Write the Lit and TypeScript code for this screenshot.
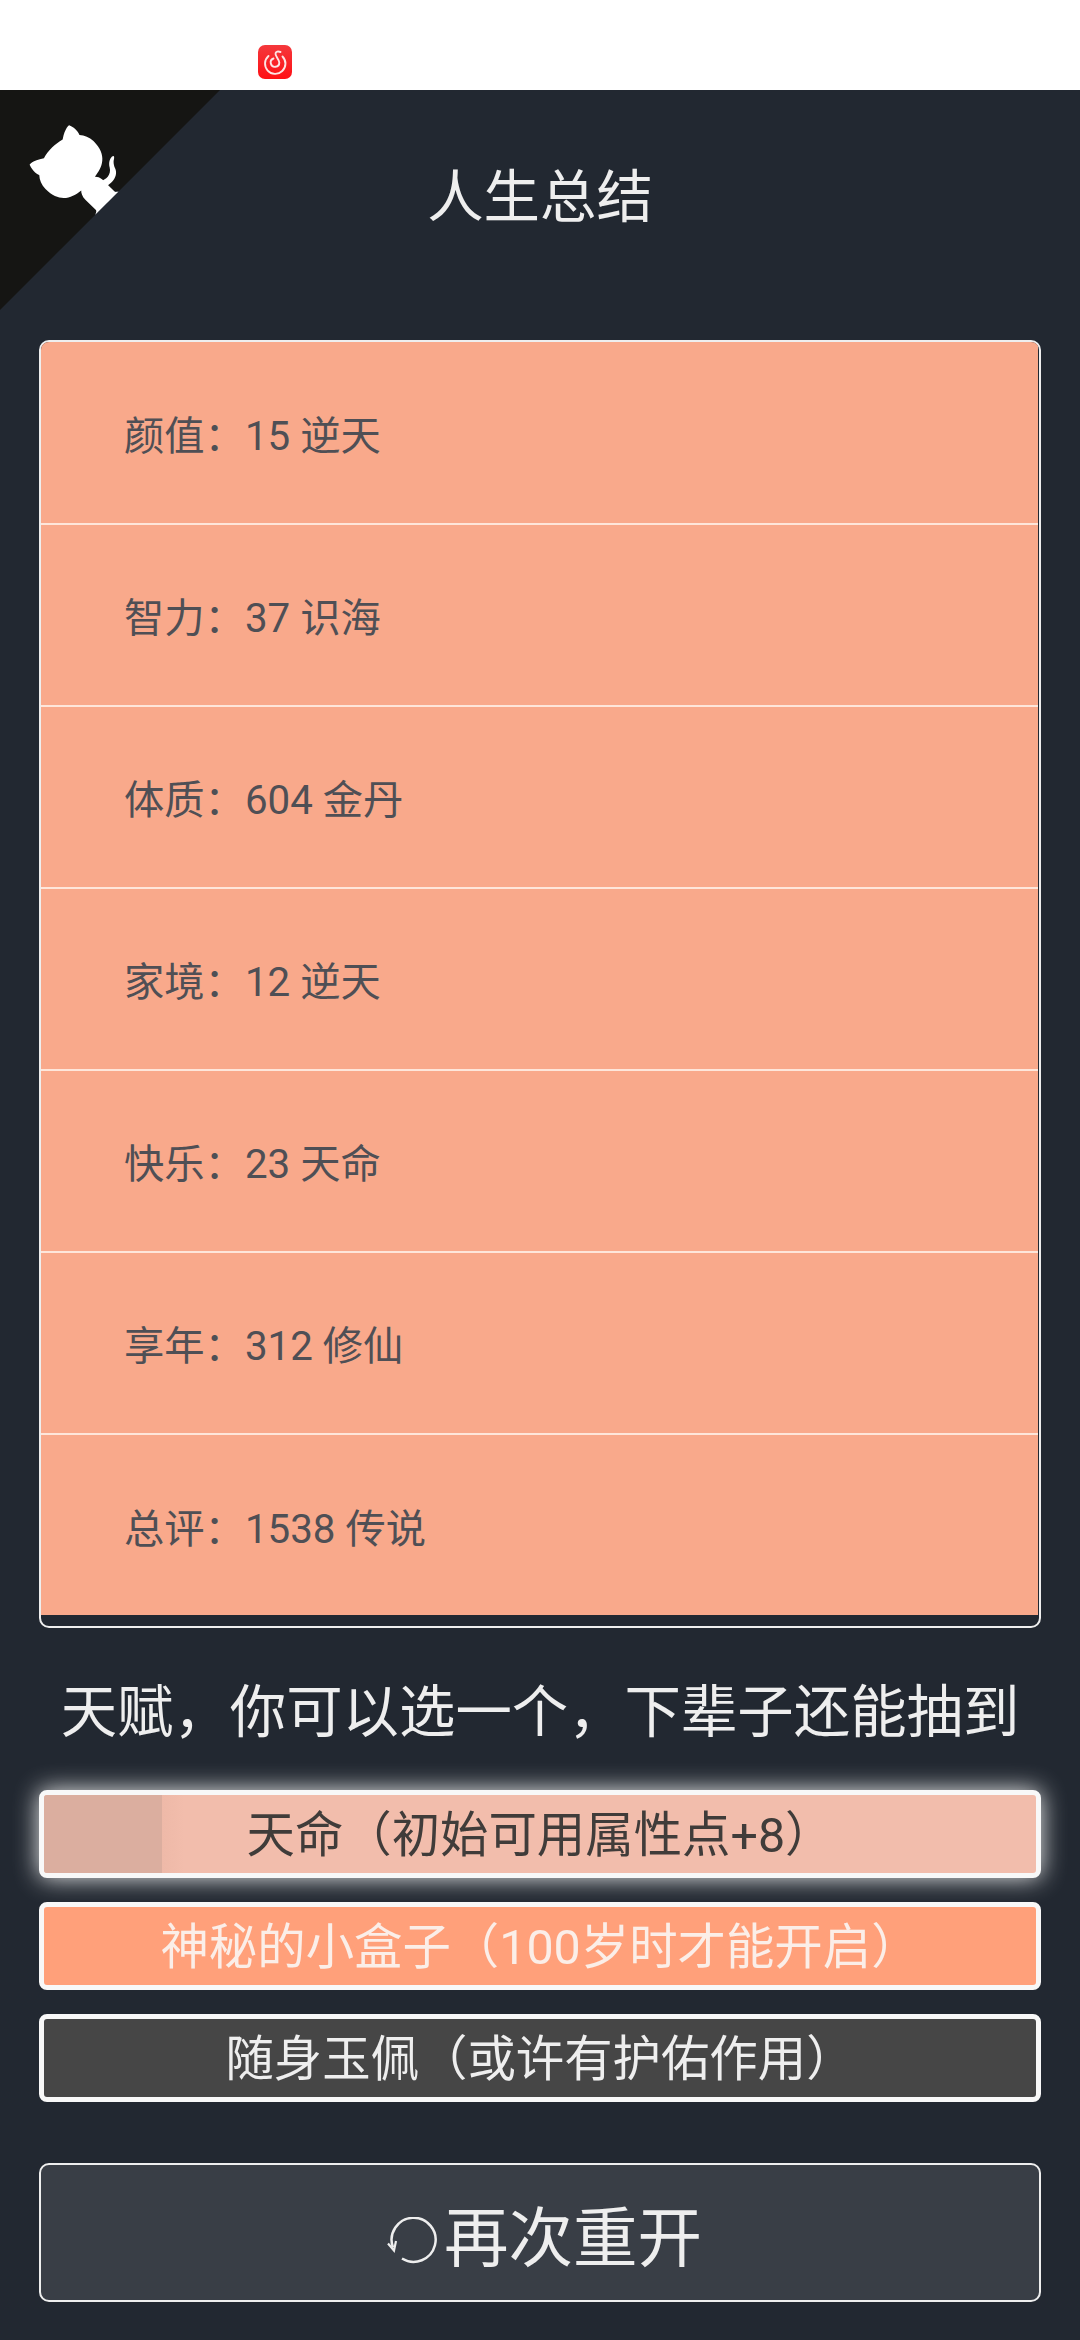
import { LitElement, html, css } from 'lit';
import { customElement } from 'lit/decorators.js';

const STATS = [
  '颜值：15 逆天',
  '智力：37 识海',
  '体质：604 金丹',
  '家境：12 逆天',
  '快乐：23 天命',
  '享年：312 修仙',
  '总评：1538 传说',
];

@customElement('app-root')
export class AppRoot extends LitElement {
  static styles = css`
    :host {
      display: block;
      width: 1080px;
      height: 2340px;
      overflow: hidden;
      font-family: Roboto, 'Noto Sans CJK SC', sans-serif;
      color: #eeeeee;
      background: #222831;
    }
    .status {
      height: 90px;
      background: #fff;
      padding: 45px 0 0 258px;
      box-sizing: border-box;
    }
    .status svg {
      display: block;
    }
    .main {
      position: relative;
      height: 2250px;
      padding: 0 39px;
      box-sizing: border-box;
      display: flex;
      flex-direction: column;
    }
    .corner {
      position: absolute;
      top: 0;
      left: 0;
      fill: #151513;
      color: #fff;
    }
    .title {
      margin: 0;
      padding-top: 66px;
      height: 250px;
      box-sizing: border-box;
      text-align: center;
      font-size: 56.4px;
      font-weight: 400;
      line-height: 84px;
    }
    .stats {
      height: 1288px;
      box-sizing: border-box;
      border: 2px solid #eeeeee;
      border-radius: 10px;
      overflow: hidden;
      padding: 0 1px 0 0;
      margin: 0;
      list-style: none;
    }
    .stats li {
      height: 182px;
      box-sizing: border-box;
      padding: 0 0 2px 83px;
      display: flex;
      align-items: center;
      font-size: 40.3px;
      color: #4f4f55;
      background: #f9a98b;
      border-bottom: 2px solid #fee6da;
    }
    .stats li:first-child {
      height: 183px;
      padding-bottom: 1px;
    }
    .stats li:last-child {
      height: 180px;
      padding-bottom: 0;
      border-bottom: none;
    }
    .hint {
      margin: 0;
      height: 162px;
      text-align: center;
      font-size: 56.4px;
      font-weight: 400;
      line-height: 170px;
      white-space: nowrap;
    }
    .talents {
      display: flex;
      flex-direction: column;
      gap: 24px;
    }
    .talent {
      position: relative;
      height: 88px;
      box-sizing: border-box;
      border: 5px solid #f8f8f8;
      border-radius: 8px;
      text-align: center;
      font-size: 48.4px;
      line-height: 81px;
      white-space: nowrap;
    }
    .talent span {
      position: relative;
    }
    .selected {
      color: #403c3a;
      background: #f2bdac;
      box-shadow: 0 0 24px #eeeeee;
    }
    .selected::before {
      content: '';
      position: absolute;
      inset: 0 auto 0 0;
      border-radius: 3px 0 0 3px;
      width: 140px;
      background: linear-gradient(to right, #dbae9f 118px, #eeb9a8 118px, #f2bdac 140px);
    }
    .rare {
      background: #ffa07a;
      color: #fbeee8;
    }
    .plain {
      background: #464646;
    }
    .retry {
      margin-top: 61px;
      height: 139px;
      box-sizing: border-box;
      border: 2px solid #eeeeee;
      border-radius: 10px;
      background: #393e46;
      display: flex;
      align-items: center;
      justify-content: center;
      font-size: 64.5px;
    }
    .retry svg {
      margin-top: 16px;
      margin-right: 6px;
    }
  `;

  render() {
    return html`
      <div class="status">
        <svg width="34" height="34" viewBox="0 0 34 34">
          <defs>
            <linearGradient id="red" x1="0" y1="0" x2="0" y2="1">
              <stop offset="0" stop-color="#f4383c"></stop>
              <stop offset="1" stop-color="#ff0f14"></stop>
            </linearGradient>
          </defs>
          <rect width="34" height="34" rx="7" fill="url(#red)"></rect>
          <g fill="none" stroke="#fde4e4" stroke-width="1.9" stroke-linecap="round">
            <path d="M10.5 11A10.2 10.2 0 1 0 24.5 11.5"></path>
            <path d="M15.5 13.5A4.3 4.3 0 1 0 21.3 17.5C21 14 17 11 17.5 8.5C17.8 6.5 20 6 22.5 7"></path>
          </g>
        </svg>
      </div>
      <div class="main">
        <svg class="corner" width="220" height="220" viewBox="0 0 250 250">
          <g transform="translate(250 0) scale(-1 1)">
            <path d="M0,0 L115,115 L130,115 L142,142 L250,250 L250,0 Z"></path>
            <path
              d="M128.3,109.0 C113.8,99.7 119.0,89.6 119.0,89.6 C122.0,82.7 120.5,78.6 120.5,78.6 C119.2,72.0 123.4,76.3 123.4,76.3 C127.3,80.9 125.5,87.3 125.5,87.3 C122.9,97.6 130.6,101.9 134.4,103.2"
              fill="currentColor"
            ></path>
            <path
              d="M115.0,115.0 C114.9,115.1 118.7,116.5 119.8,115.4 L133.7,101.6 C136.9,99.2 139.9,98.4 142.2,98.6 C133.8,88.0 127.5,74.4 143.8,58.0 C148.5,53.4 154.0,51.2 159.7,51.0 C160.3,49.4 163.2,43.6 171.4,40.1 C171.4,40.1 176.1,42.5 178.8,56.2 C183.1,58.6 187.2,61.8 190.9,65.4 C194.5,69.0 197.7,73.2 200.1,77.6 C213.8,80.2 216.3,84.9 216.3,84.9 C212.7,93.1 206.9,96.0 205.4,96.6 C205.1,102.4 203.0,107.8 198.3,112.5 C181.9,128.9 168.3,122.5 157.7,114.1 C157.9,116.9 156.7,120.9 152.7,124.9 L141.0,136.5 C139.8,137.7 141.6,141.9 141.8,141.8 Z"
              fill="currentColor"
            ></path>
          </g>
        </svg>
        <h1 class="title">人生总结</h1>
        <ul class="stats">
          ${STATS.map((s) => html`<li>${s}</li>`)}
        </ul>
        <h2 class="hint">天赋，你可以选一个，下辈子还能抽到</h2>
        <div class="talents">
          <div class="talent selected"><span>天命（初始可用属性点+8）</span></div>
          <div class="talent rare"><span>神秘的小盒子（100岁时才能开启）</span></div>
          <div class="talent plain"><span>随身玉佩（或许有护佑作用）</span></div>
        </div>
        <div class="retry">
          <svg width="60" height="48" viewBox="0 0 60 48" fill="none" stroke="#eeeeee" stroke-width="2.5">
            <path d="M24 41.5A22 22 0 1 0 15 30.5"></path>
            <path d="M10 26.5L16 33.5L18 24" stroke-width="2.2"></path>
          </svg>
          再次重开
        </div>
      </div>
    `;
  }
}
